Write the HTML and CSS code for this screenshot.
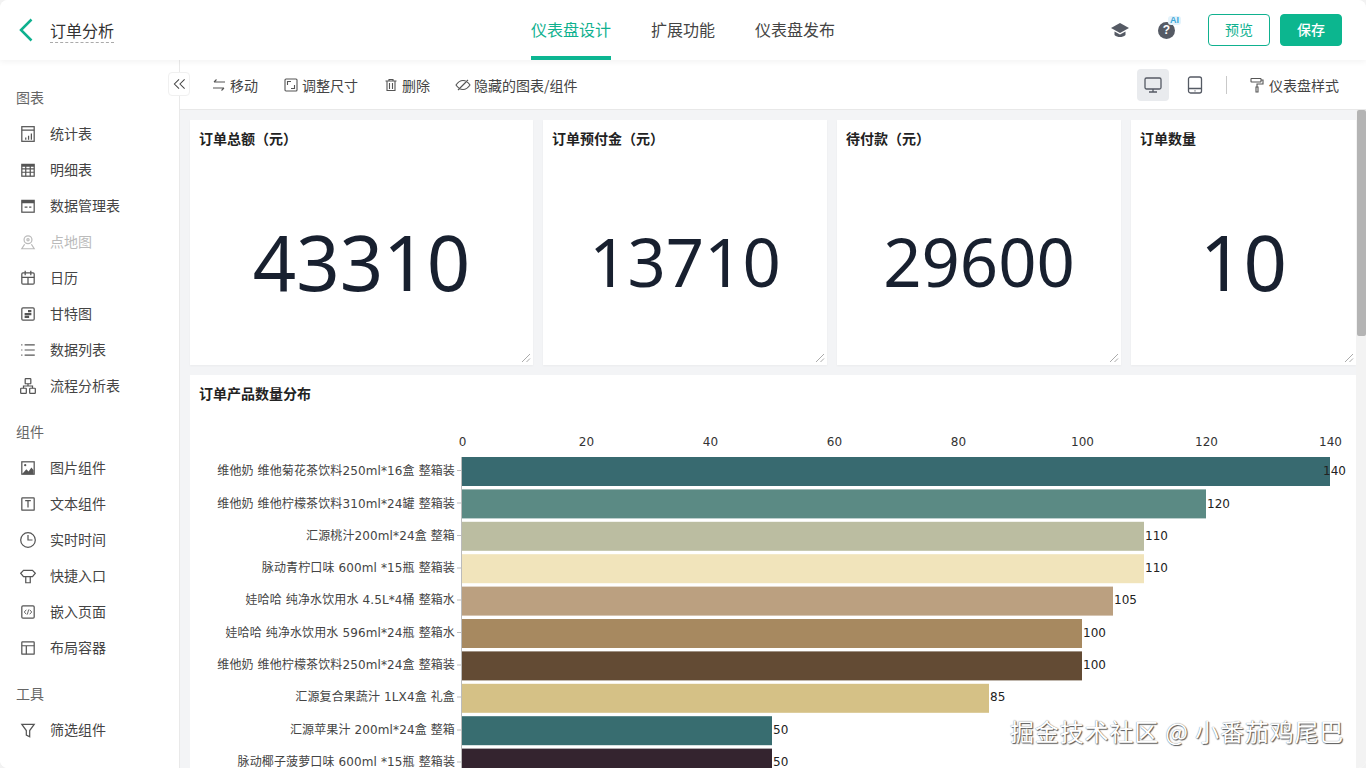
FILE: index.html
```html
<!DOCTYPE html>
<html lang="zh-CN">
<head>
<meta charset="utf-8">
<title>订单分析</title>
<link rel="stylesheet" href="styles.css">
</head>
<body>
<div class="app">
  <header class="topbar">
    <div class="top-left">
      <svg class="back" viewBox="0 0 14 24"><path d="M12.5 1.5 2 12l10.500 10.500"/></svg>
      <span class="page-title">订单分析</span>
    </div>
    <nav class="tabs">
      <a class="tab active">仪表盘设计</a>
      <a class="tab">扩展功能</a>
      <a class="tab">仪表盘发布</a>
    </nav>
    <div class="top-right">
      <svg class="hat" viewBox="0 0 18 16"><path d="M9 1 0 6l9 5 9-5z"/><path d="M3.500 9.500V13c1.500 1.500 3.500 2 5.500 2s4-.5 5.500-2V9.500L9 12.500z"/></svg>
      <span class="help"><span class="help-mark">?</span><span class="ai">AI</span></span>
      <button class="btn ghost">预览</button>
      <button class="btn solid">保存</button>
    </div>
  </header>
  <div class="body">
    <aside class="sidebar">
      <div class="group-label">图表</div>
      <div class="item"><svg class="ico" viewBox="0 0 16 16"><rect x="2.500" y="1.500" width="11" height="13"/><path d="M2.500 4.500h11M6 13v-2M8.500 13V9.500M11 13V7.500"/></svg>统计表</div>
      <div class="item"><svg class="ico" viewBox="0 0 16 16"><rect x="2.500" y="3" width="11" height="10.500"/><path class="heavy" d="M2.500 4.200h11"/><path d="M2.500 7h11M2.500 10h11M6 3v10.500M10 3v10.500"/></svg>明细表</div>
      <div class="item"><svg class="ico" viewBox="0 0 16 16"><rect x="2.500" y="3" width="11" height="10.500"/><path class="heavy" d="M2.500 4.500h11"/><path d="M5 9h2.500M9 9h2"/></svg>数据管理表</div>
      <div class="item disabled"><svg class="ico" viewBox="0 0 16 16"><circle cx="8" cy="6" r="3.500"/><circle cx="8" cy="6" r="1"/><path d="M5 10 2.500 14h11L11 10"/></svg>点地图</div>
      <div class="item"><svg class="ico" viewBox="0 0 16 16"><rect x="2.500" y="3.500" width="11" height="10" rx="1"/><path d="M5.500 1.500v4M10.500 1.500v4M2.500 7.500h11M8 7.500v6"/></svg>日历</div>
      <div class="item"><svg class="ico" viewBox="0 0 16 16"><rect x="2.500" y="2.500" width="11" height="11" rx="1"/><path class="heavy" d="M8 5.500h3M5 8h6M5 10.500h4"/></svg>甘特图</div>
      <div class="item"><svg class="ico" viewBox="0 0 16 16"><path d="M5 3.500h9M5 8h9M5 12.500h9M2 3.500h1M2 8h1M2 12.500h1"/></svg>数据列表</div>
      <div class="item"><svg class="ico" viewBox="0 0 16 16"><rect x="5.500" y="1.500" width="5" height="4.500" rx=".5"/><rect x="1.500" y="10" width="5" height="4.500" rx=".5"/><rect x="9.500" y="10" width="5" height="4.500" rx=".5"/><path d="M8 6v2M4 10V8h8v2"/></svg>流程分析表</div>
      <div class="group-label spaced">组件</div>
      <div class="item"><svg class="ico" viewBox="0 0 16 16"><rect x="2.500" y="2.500" width="11" height="11"/><path class="fill" d="M3 13l3.500-4 2 2 2.500-3.500L13 10v3.500H3z"/><circle class="fill" cx="5.500" cy="5.500" r="1"/></svg>图片组件</div>
      <div class="item"><svg class="ico" viewBox="0 0 16 16"><rect x="2.500" y="2.500" width="11" height="11" rx=".5"/><path d="M5.500 5h5M8 5v6"/></svg>文本组件</div>
      <div class="item"><svg class="ico" viewBox="0 0 16 16"><circle cx="8" cy="8" r="6.500"/><path d="M8 3.500V8h4"/></svg>实时时间</div>
      <div class="item"><svg class="ico" viewBox="0 0 16 16"><path d="M4 3h8l2.500 2.500L12 8.500H4L1.500 5.500zM6 8.500V14h4V8.500"/></svg>快捷入口</div>
      <div class="item"><svg class="ico" viewBox="0 0 16 16"><rect x="2.500" y="2.500" width="11" height="11" rx="1"/><path class="thin" d="M6.500 6 4.700 8l1.800 2M9.500 6l1.800 2-1.800 2M8.600 5.800l-1.200 4.400"/></svg>嵌入页面</div>
      <div class="item"><svg class="ico" viewBox="0 0 16 16"><rect x="2.500" y="2.500" width="11" height="11" rx=".5"/><path d="M2.500 6h11M6.500 6v7.500"/></svg>布局容器</div>
      <div class="group-label spaced">工具</div>
      <div class="item"><svg class="ico" viewBox="0 0 16 16"><path d="M2.500 3h11L9.500 8.500V14l-3-1.500v-4z"/></svg>筛选组件</div>
    </aside>
    <main class="workspace">
      <button class="collapse"><svg viewBox="0 0 14 12"><path d="M6.500 1 1.500 6l5 5M12.500 1l-5 5 5 5"/></svg></button>
      <div class="toolbar">
        <div class="tools">
          <span class="tool"><svg class="ico small" viewBox="0 0 14 14"><path d="M13 4H2M4.500 1.500 2 4M1 10h11M9.500 12.500 12 10"/></svg>移动</span>
          <span class="tool"><svg class="ico small" viewBox="0 0 14 14"><rect x="1" y="1" width="12" height="12" rx="1"/><path d="M3.500 7V3.500H7M10.500 7v3.500H7"/></svg>调整尺寸</span>
          <span class="tool"><svg class="ico small" viewBox="0 0 14 14"><path d="M1.500 3h11M5 3V1.500h4V3M3 3v9.500h8V3M5.500 5v6M8.500 5v6"/></svg>删除</span>
          <span class="tool"><svg class="ico eye" viewBox="0 0 16 14"><path d="M1 7c2-3 4.300-4.500 7-4.500S13 4 15 7c-2 3-4.300 4.500-7 4.500S3 10 1 7zM3 12 13 2"/></svg>隐藏的图表/组件</span>
        </div>
        <div class="views">
          <span class="view active"><svg viewBox="0 0 18 18"><rect x="1" y="2" width="16" height="11" rx="1.500"/><path d="M9 13v3M5 16h8"/></svg></span>
          <span class="view"><svg viewBox="0 0 18 18"><rect x="2.500" y="1" width="13" height="16" rx="2"/><path d="M2.500 12.500h13M8.500 14.800h1"/></svg></span>
          <span class="divider"></span>
          <span class="tool style"><svg class="ico roller" viewBox="0 0 14 16"><rect x="1" y="1.500" width="10" height="3.500" rx=".5"/><path d="M11 3h2v4H7v3M6 10h2v5H6z"/></svg>仪表盘样式</span>
        </div>
      </div>
      <div class="stage">
        <div class="canvas">
          <div class="metrics">
            <section class="card metric">
              <h3 class="card-title">订单总额（元）</h3>
              <div class="value big">43310</div>
              <svg class="grip" viewBox="0 0 10 10"><path d="M1 9 9 1M5.500 9 9 5.500"/></svg>
            </section>
            <section class="card metric">
              <h3 class="card-title">订单预付金（元）</h3>
              <div class="value">13710</div>
              <svg class="grip" viewBox="0 0 10 10"><path d="M1 9 9 1M5.500 9 9 5.500"/></svg>
            </section>
            <section class="card metric">
              <h3 class="card-title">待付款（元）</h3>
              <div class="value">29600</div>
              <svg class="grip" viewBox="0 0 10 10"><path d="M1 9 9 1M5.500 9 9 5.500"/></svg>
            </section>
            <section class="card metric">
              <h3 class="card-title">订单数量</h3>
              <div class="value big">10</div>
              <svg class="grip" viewBox="0 0 10 10"><path d="M1 9 9 1M5.500 9 9 5.500"/></svg>
            </section>
          </div>
          <section class="card chart-card">
            <h3 class="card-title">订单产品数量分布</h3>
            <svg class="chart" viewBox="190 415 1166 353" width="1166" height="353">
              <g class="axis-labels">
                <text x="462.500" y="446">0</text><text x="586.500" y="446">20</text><text x="710.500" y="446">40</text><text x="834.500" y="446">60</text><text x="958.500" y="446">80</text><text x="1082.500" y="446">100</text><text x="1206.500" y="446">120</text><text x="1330.500" y="446">140</text>
              </g>
              <g>
                <rect x="462" y="457" width="868" height="29" fill="#386a70"/>
                <rect x="462" y="489.400" width="744" height="29" fill="#5b8a84"/>
                <rect x="462" y="521.800" width="682" height="29" fill="#bbbda1"/>
                <rect x="462" y="554.200" width="682" height="29" fill="#f1e4bb"/>
                <rect x="462" y="586.600" width="651" height="29" fill="#bba080"/>
                <rect x="462" y="619" width="620" height="29" fill="#a78960"/>
                <rect x="462" y="651.400" width="620" height="29" fill="#634b34"/>
                <rect x="462" y="683.800" width="527" height="29" fill="#d5c186"/>
                <rect x="462" y="716.200" width="310" height="29" fill="#386d70"/>
                <rect x="462" y="748.600" width="310" height="29" fill="#34242f"/>
              </g>
              <path class="axis-line" d="M461.500 457V768M457 470.500h4M457 503h4M457 535.500h4M457 568h4M457 600h4M457 632.500h4M457 665h4M457 697h4M457 730h4M457 762h4"/>
              <g class="row-labels">
                <text x="455" y="474.500">维他奶 维他菊花茶饮料250ml*16盒 整箱装</text>
                <text x="455" y="507.500">维他奶 维他柠檬茶饮料310ml*24罐 整箱装</text>
                <text x="455" y="539.500">汇源桃汁200ml*24盒 整箱</text>
                <text x="455" y="571.500">脉动青柠口味 600ml *15瓶 整箱装</text>
                <text x="455" y="604">娃哈哈 纯净水饮用水 4.5L*4桶 整箱水</text>
                <text x="455" y="636.500">娃哈哈 纯净水饮用水 596ml*24瓶 整箱水</text>
                <text x="455" y="668.500">维他奶 维他柠檬茶饮料250ml*24盒 整箱装</text>
                <text x="455" y="701">汇源复合果蔬汁 1LX4盒 礼盒</text>
                <text x="455" y="733.500">汇源苹果汁 200ml*24盒 整箱</text>
                <text x="455" y="765.500">脉动椰子菠萝口味 600ml *15瓶 整箱装</text>
              </g>
              <g class="bar-values">
                <text x="1323" y="475">140</text>
                <text x="1207" y="508">120</text>
                <text x="1145" y="540">110</text>
                <text x="1145" y="572">110</text>
                <text x="1114" y="604">105</text>
                <text x="1083" y="637">100</text>
                <text x="1083" y="669">100</text>
                <text x="990" y="701">85</text>
                <text x="773" y="734">50</text>
                <text x="773" y="766">50</text>
              </g>
            </svg>
          </section>
        </div>
        <div class="scrollbar"><div class="thumb"></div></div>
      </div>
    </main>
  </div>
  <div class="watermark">掘金技术社区 @ 小番茄鸡尾巴</div>
</div>
</body>
</html>
```
FILE: styles.css
```css
* { box-sizing: border-box; }
html, body { margin: 0; height: 100%; overflow: hidden; background: #f2f2f2; }
body { font-family: "Noto Sans CJK SC", "Noto Sans", sans-serif; color: #333; font-size: 14px; }
.app { position: relative; width: 1366px; height: 768px; display: flex; flex-direction: column; background: #fff; border-radius: 8px; overflow: hidden; }

.topbar { position: relative; z-index: 3; flex: none; height: 60px; display: grid; grid-template-columns: 1fr auto 1fr; background: #fff; box-shadow: 0 2px 6px rgba(0, 0, 0, .05); }
.top-left { display: flex; align-items: center; padding-left: 19px; }
.back { width: 14px; height: 24px; fill: none; stroke: #0fb18f; stroke-width: 2.500; margin-right: 17px; }
.page-title { font-size: 16px; line-height: 24px; color: #333; border-bottom: 1px dashed #aaa; margin-top: 1px; }

.tabs { display: flex; gap: 40px; }
.tab { height: 60px; line-height: 59px; font-size: 16px; color: #444; }
.tab.active { color: #0fb18f; border-bottom: 4px solid #0db692; }

.top-right { display: flex; align-items: center; justify-content: flex-end; padding-right: 24px; }
.hat { width: 18px; height: 16px; fill: #555a64; margin-right: 29px; }
.help { position: relative; width: 17px; height: 17px; margin-right: 33px; border-radius: 50%; background: #555a64; text-align: center; }
.help-mark { display: block; color: #fff; font: 700 12px/17px "Liberation Sans", sans-serif; }
.ai { position: absolute; left: 10px; top: -6px; padding: 0 2px; font: 700 9px/9px "Liberation Sans", sans-serif; color: #3ba7d8; background: #e4f3fb; border-radius: 3px; }
.btn { width: 62px; height: 32px; border-radius: 4px; font: 14px/1 "Noto Sans CJK SC", sans-serif; padding: 0 0 2px; }
.ghost { background: #fff; border: 1px solid #0fb18f; color: #0fb18f; margin-right: 10px; }
.solid { background: #0cb68f; border: 1px solid #0cb68f; color: #fff; font-weight: 500; }

.body { flex: 1; min-height: 0; display: flex; }
.sidebar { flex: none; width: 180px; padding-top: 20px; border-right: 1px solid #e9e9e9; background: #fff; }
.group-label { height: 36px; line-height: 34px; padding-left: 16px; color: #666; }
.group-label.spaced { margin-top: 10px; }
.item { height: 36px; display: flex; align-items: center; padding: 0 0 2px 20px; color: #444; }
.item.disabled { color: #bbb; }
.ico { flex: none; width: 18px; height: 18px; margin: 2px 13px 0 -1px; fill: none; stroke: currentColor; stroke-width: 1.100; color: #555; }
.disabled .ico { color: #bbb; }
.ico .heavy { stroke-width: 2; }
.ico .thin { stroke-width: .8; }
.ico .fill { fill: currentColor; stroke: none; }
.ico.small { width: 14px; height: 14px; margin: 0 4px 0 0; }
.ico.eye { width: 16px; height: 14px; margin: 0 3px 0 -1px; }
.ico.roller { width: 14px; height: 16px; margin: 0 5px 0 0; }

.workspace { position: relative; flex: 1; min-width: 0; display: flex; flex-direction: column; }
.collapse { position: absolute; left: -12px; top: 12px; z-index: 2; width: 22px; height: 24px; padding: 0; background: #fff; border: 1px solid #f0f0f0; border-radius: 4px; display: flex; align-items: center; justify-content: center; }
.collapse svg { width: 13px; height: 12px; fill: none; stroke: #444; stroke-width: 1.100; }
.toolbar { flex: none; height: 50px; display: flex; justify-content: space-between; align-items: center; padding: 0 27px 0 32px; border-bottom: 1px solid #e8e8e8; }
.tools { display: flex; gap: 26px; }
.tool { display: inline-flex; align-items: center; color: #444; line-height: 20px; white-space: nowrap; }
.views { display: flex; align-items: center; }
.view { width: 32px; height: 32px; border-radius: 4px; display: flex; align-items: center; justify-content: center; }
.view svg { width: 18px; height: 18px; fill: none; stroke: #555a64; stroke-width: 1.300; }
.view.active { background: #e9ebee; }
.view + .view { margin-left: 10px; }
.divider { width: 1px; height: 18px; background: #c9c9c9; margin: 0 23px 0 15px; }

.stage { flex: 1; min-height: 0; display: flex; }
.canvas { flex: 1; min-width: 0; padding: 10px 0 0 10px; background: #f3f4f6; overflow: hidden; }
.scrollbar { flex: none; width: 10px; background: #f3f3f3; }
.thumb { width: 9px; margin-left: 1px; height: 226px; background: #b4b4b4; border-radius: 2px; }

.metrics { display: grid; grid-template-columns: 343px 284px 284px 225px; gap: 10px; }
.card { position: relative; background: #fff; }
.metric { height: 245px; display: flex; flex-direction: column; box-shadow: 0 1px 2px rgba(0, 0, 0, .04); }
.card-title { flex: none; height: 40px; margin: 0; padding-left: 9px; font-size: 14px; line-height: 36px; font-weight: 700; color: #222; }
.value { flex: 1; display: flex; align-items: center; justify-content: center; padding-bottom: 3px; font-family: "Noto Sans", sans-serif; font-size: 67px; color: #18202f; }
.value.big { font-size: 76px; }
.grip { position: absolute; right: 2px; bottom: 2px; width: 10px; height: 10px; fill: none; stroke: #aaa; stroke-width: 1; }
.chart-card { margin-top: 10px; height: 393px; overflow: hidden; }
.chart { display: block; font-family: "DejaVu Sans", "Noto Sans CJK SC", sans-serif; font-size: 12px; }
.axis-labels text { text-anchor: middle; fill: #333; }
.row-labels text { text-anchor: end; fill: #444; letter-spacing: .12px; }
.bar-values text { fill: #222; }
.axis-line { fill: none; stroke: #bbb; stroke-width: 1; }

.watermark { position: absolute; left: 1010px; top: 713px; font-size: 24px; line-height: 36px; letter-spacing: .85px; color: #fff; text-shadow: 1px 1px 1px #555, 0 0 1px #666; white-space: nowrap; }
```
